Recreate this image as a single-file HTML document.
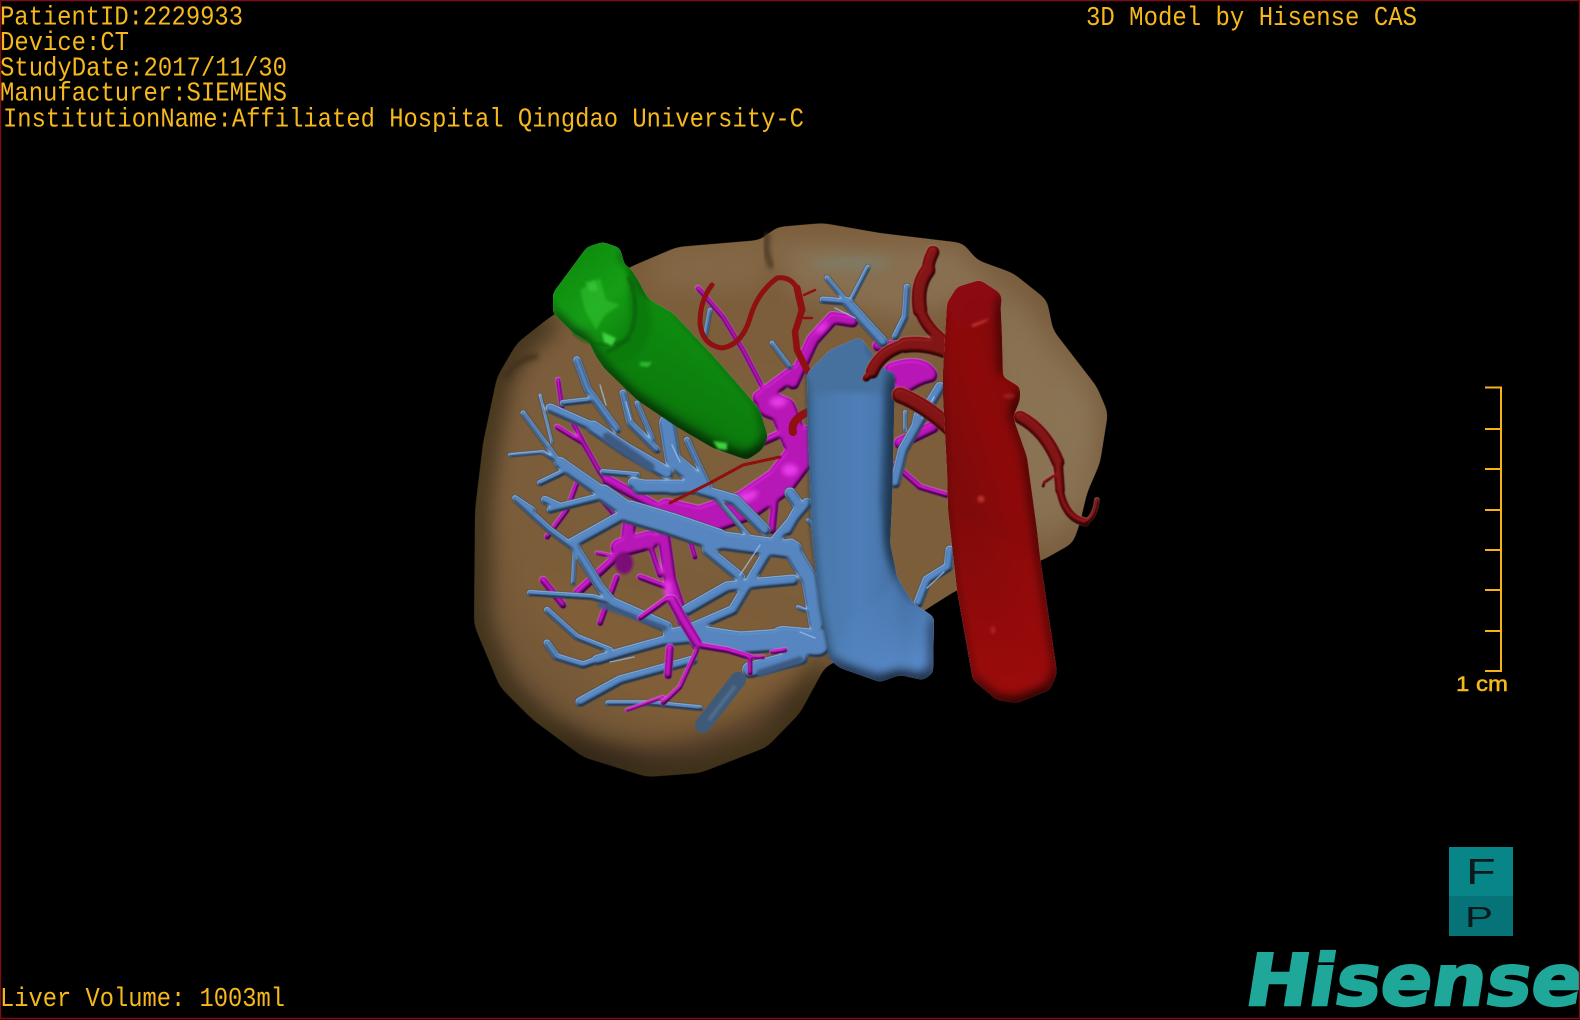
<!DOCTYPE html>
<html><head><meta charset="utf-8"><title>3D Model</title>
<style>html,body{margin:0;padding:0;background:#000;width:1580px;height:1020px;overflow:hidden}svg{display:block}
text{font-family:"Liberation Mono",monospace;fill:#f6b81c}</style></head><body>
<svg width="1580" height="1020" viewBox="0 0 1580 1020" xmlns="http://www.w3.org/2000/svg">
<defs>
<radialGradient id="lv" gradientUnits="userSpaceOnUse" cx="760" cy="450" r="350">
<stop offset="0" stop-color="#7e5f3b"/><stop offset=".75" stop-color="#7b5d3b"/><stop offset="1" stop-color="#6d5335"/></radialGradient>
<linearGradient id="gb" gradientUnits="userSpaceOnUse" x1="705" y1="345" x2="655" y2="440">
<stop offset="0" stop-color="#0e8a0f"/><stop offset=".6" stop-color="#0c7e0c"/><stop offset="1" stop-color="#065006"/></linearGradient>
<linearGradient id="gc" gradientUnits="userSpaceOnUse" x1="560" y1="260" x2="640" y2="350">
<stop offset="0" stop-color="#0c8a0c"/><stop offset=".5" stop-color="#16a016"/><stop offset="1" stop-color="#0a7a0a"/></linearGradient>
<linearGradient id="ivc" gradientUnits="userSpaceOnUse" x1="808" y1="0" x2="905" y2="0">
<stop offset="0" stop-color="#3f6c9c"/><stop offset=".14" stop-color="#4a79ad"/><stop offset=".55" stop-color="#4f80bb"/><stop offset=".88" stop-color="#4673a8"/><stop offset="1" stop-color="#3a6390"/></linearGradient>
<linearGradient id="ivl" gradientUnits="userSpaceOnUse" x1="840" y1="580" x2="930" y2="680">
<stop offset="0" stop-color="#4f80bb" stop-opacity="0"/><stop offset="1" stop-color="#5f92d6"/></linearGradient>
<linearGradient id="ao" gradientUnits="userSpaceOnUse" x1="945" y1="430" x2="1045" y2="400">
<stop offset="0" stop-color="#800a0a"/><stop offset=".45" stop-color="#8f0909"/><stop offset="1" stop-color="#7a0808"/></linearGradient>
<linearGradient id="ao2" gradientUnits="userSpaceOnUse" x1="0" y1="500" x2="0" y2="700">
<stop offset="0" stop-color="#a00a0a" stop-opacity="0"/><stop offset="1" stop-color="#9e0b0b"/></linearGradient>
<clipPath id="lc"><path d="M630 267L677 247 760 240 777 227 823 223 880 233 963 243 977 260 1013 273 1047 300 1053 330 1097 387 1108 413 1100 463 1087 493 1080 523 1073 543 1043 560 957 590 930 607 880 640 825 667 800 713 767 747 700 773 647 777 583 757 533 720 500 687 474 625 475 510 483 443 497 377 517 343 550 317Z"/></clipPath>
<filter id="goo" filterUnits="userSpaceOnUse" x="400" y="200" width="760" height="600" color-interpolation-filters="sRGB">
<feGaussianBlur in="SourceGraphic" stdDeviation="5"/><feColorMatrix type="matrix" values="1 0 0 0 0 0 1 0 0 0 0 0 1 0 0 0 0 0 16 -7.5"/></filter>
<filter id="goo3" filterUnits="userSpaceOnUse" x="400" y="200" width="760" height="600" color-interpolation-filters="sRGB">
<feGaussianBlur in="SourceGraphic" stdDeviation="3"/><feColorMatrix type="matrix" values="1 0 0 0 0 0 1 0 0 0 0 0 1 0 0 0 0 0 16 -7.5"/></filter>
<filter id="b8" x="-30%" y="-30%" width="160%" height="160%"><feGaussianBlur stdDeviation="11"/></filter>
<filter id="b18" x="-30%" y="-30%" width="160%" height="160%"><feGaussianBlur stdDeviation="18"/></filter>
<filter id="b3" x="-40%" y="-40%" width="180%" height="180%"><feGaussianBlur stdDeviation="2.5"/></filter>
<filter id="b1" x="-60%" y="-60%" width="220%" height="220%"><feGaussianBlur stdDeviation="1.2"/></filter>
<filter id="tube" filterUnits="userSpaceOnUse" x="400" y="200" width="760" height="600" color-interpolation-filters="sRGB">
<feMorphology in="SourceGraphic" operator="dilate" radius=".5" result="G"/>
<feGaussianBlur in="G" stdDeviation=".5" result="G2"/>
<feColorMatrix in="G2" type="matrix" values="0 0 0 0 0 0 0 0 0 0 0 0 0 0 0 0 0 0 1 0" result="A"/>
<feGaussianBlur in="A" stdDeviation="1.8" result="a"/>
<feDiffuseLighting in="a" surfaceScale="2.6" diffuseConstant="1.1" lighting-color="#fff" result="d"><feDistantLight azimuth="250" elevation="58"/></feDiffuseLighting>
<feComposite in="d" in2="A" operator="in" result="d2"/>
<feBlend in="G2" in2="d2" mode="multiply" result="m"/>
<feSpecularLighting in="a" surfaceScale="2.6" specularConstant=".08" specularExponent="14" lighting-color="#fff" result="s"><feDistantLight azimuth="250" elevation="58"/></feSpecularLighting>
<feComposite in="s" in2="A" operator="in" result="s2"/>
<feComposite in="m" in2="s2" operator="arithmetic" k1="0" k2="1" k3="1" k4="0"/>
</filter>
<filter id="tubeB" filterUnits="userSpaceOnUse" x="400" y="200" width="760" height="600" color-interpolation-filters="sRGB">
<feMorphology in="SourceGraphic" operator="dilate" radius=".5" result="G"/>
<feGaussianBlur in="G" stdDeviation=".5" result="G2"/>
<feColorMatrix in="G2" type="matrix" values="0 0 0 0 0 0 0 0 0 0 0 0 0 0 0 0 0 0 1.6 0" result="A"/>
<feMorphology in="A" operator="dilate" radius=".6" result="o"/>
<feFlood flood-color="#1f3348"/><feComposite in2="o" operator="in" result="line"/>
<feGaussianBlur in="A" stdDeviation="1.6" result="a"/>
<feDiffuseLighting in="a" surfaceScale="2.2" diffuseConstant="1.14" lighting-color="#fff" result="d"><feDistantLight azimuth="250" elevation="60"/></feDiffuseLighting>
<feComposite in="d" in2="A" operator="in" result="d2"/>
<feBlend in="G2" in2="d2" mode="multiply" result="m"/>
<feSpecularLighting in="a" surfaceScale="2.2" specularConstant=".06" specularExponent="18" lighting-color="#cfe6ff" result="s"><feDistantLight azimuth="250" elevation="60"/></feSpecularLighting>
<feComposite in="s" in2="A" operator="in" result="s2"/>
<feComposite in="m" in2="s2" operator="arithmetic" k1="0" k2="1" k3="1" k4="0" result="t"/>
<feMerge><feMergeNode in="line"/><feMergeNode in="t"/></feMerge>
</filter>
<filter id="soft" filterUnits="userSpaceOnUse" x="400" y="200" width="760" height="600" color-interpolation-filters="sRGB">
<feGaussianBlur in="SourceAlpha" stdDeviation="6" result="a"/>
<feDiffuseLighting in="a" surfaceScale="6" diffuseConstant="1.17" lighting-color="#fff" result="d"><feDistantLight azimuth="250" elevation="58"/></feDiffuseLighting>
<feComposite in="d" in2="SourceAlpha" operator="in" result="d2"/>
<feBlend in="SourceGraphic" in2="d2" mode="multiply"/>
</filter>
</defs>
<rect width="1580" height="1020" fill="#000"/>

<!-- liver -->
<g filter="url(#goo)"><g clip-path="url(#lc)">
<rect x="460" y="210" width="660" height="580" fill="url(#lv)"/>
<path d="M1000 270L1110 410 1090 500 1050 560 1000 500 980 300Z" fill="#8c7656" filter="url(#b18)" opacity=".9"/>
<path d="M770 240L960 245 1000 290 900 320 790 290Z" fill="#8a7355" filter="url(#b8)" opacity=".85"/>
<ellipse cx="850" cy="263" rx="42" ry="7" fill="#7f7c66" filter="url(#b3)"/>
<path d="M660 250L780 240 760 290 650 290Z" fill="#866b4a" filter="url(#b8)" opacity=".8"/>
<path d="M550 317L517 343 497 377 483 443 475 510 474 625 500 687 533 720 583 757 647 777 700 773 767 747 800 713 825 667" fill="none" stroke="#100a04" stroke-width="22" filter="url(#b8)" opacity=".7"/>
<path d="M560 740Q680 790 800 690" fill="none" stroke="#1c1208" stroke-width="22" filter="url(#b8)" opacity=".45"/>
<path d="M520 560Q530 660 660 730Q760 740 810 640" fill="#8a6234" filter="url(#b18)" opacity=".35"/>
<path d="M1080 520Q1100 430 1060 360" fill="none" stroke="#9a8668" stroke-width="20" filter="url(#b18)" opacity=".4"/>
</g></g>
<path d="M505 378Q516 358 538 356" fill="none" stroke="#3f2f1b" stroke-width="6" filter="url(#b3)" opacity=".8"/>
<path d="M768 234Q763 250 772 268" fill="none" stroke="#4f3d26" stroke-width="6" filter="url(#b3)"/>

<!-- portal magenta rear -->
<g fill="none" stroke="#b80bb8" stroke-linecap="round" stroke-linejoin="round" filter="url(#tube)">
<path d="M698 288L723 317 743 350 765 392" stroke-width="4"/>
<path d="M793 383L813 340 833 318 852 321" stroke-width="12"/>
<path d="M770 405L783 410 795 440" stroke-width="26"/>
<path d="M760 398L795 372" stroke-width="14"/>
<path d="M760 443L785 432" stroke-width="7"/>
<path d="M667 510L707 519" stroke-width="22"/>
<path d="M707 519L745 506 780 482 812 440" stroke-width="30"/>
<path d="M775 500L772 530" stroke-width="7"/>
<path d="M690 540L695 557" stroke-width="4"/>
<path d="M878 346L900 346" stroke-width="10"/>
<path d="M892 370Q920 360 930 375Q915 378 897 392" fill="#b80bb8" stroke-width="14"/>
<path d="M900 443L933 427" stroke-width="11"/>
<path d="M895 465L920 487 947 495" stroke-width="5"/>
<path d="M558 380L562 407" stroke-width="4"/><path d="M557 427L583 443 603 477" stroke-width="4"/><path d="M573 423L600 473" stroke-width="4"/>
<path d="M607 480L657 507" stroke-width="9"/><path d="M577 483L567 510 547 537" stroke-width="4"/>
<path d="M600 497L617 517" stroke-width="5"/>
<path d="M663 530L670 580 683 620 697 643" stroke-width="12"/>
<path d="M657 537L627 547 577 593" stroke-width="7"/>
<path d="M627 545L630 520" stroke-width="13"/><path d="M620 548L650 540" stroke-width="18"/>
<path d="M640 577L667 587" stroke-width="5"/><path d="M617 577L600 623" stroke-width="5"/>
<path d="M543 580L563 605" stroke-width="6"/><path d="M597 553L612 556" stroke-width="3"/><path d="M650 545L660 575" stroke-width="5"/>
<path d="M640 618L670 597" stroke-width="4"/>
</g>
<ellipse cx="624" cy="563" rx="9" ry="11" fill="#7a0f78" filter="url(#b1)"/>
<g fill="#e63ae6" filter="url(#b3)"><ellipse cx="745" cy="498" rx="14" ry="5" transform="rotate(-25 745 498)"/><ellipse cx="778" cy="402" rx="8" ry="5"/><ellipse cx="790" cy="470" rx="8" ry="6"/><ellipse cx="668" cy="590" rx="4" ry="10"/><ellipse cx="822" cy="328" rx="7" ry="3" transform="rotate(-40 822 328)"/></g>

<!-- hepatic blue -->
<g fill="none" stroke="#5080ba" stroke-linecap="round" stroke-linejoin="round" filter="url(#tubeB)">
<path d="M823 300L847 302" stroke-width="5"/><path d="M847 302L863 320 883 342" stroke-width="8"/>
<path d="M827 278L847 302" stroke-width="3"/><path d="M868 267L852 298" stroke-width="2.5"/>
<path d="M907 287L905 317 895 337" stroke-width="4.5"/>
<path d="M772 343L790 367" stroke-width="2.5"/><path d="M710 310L705 337" stroke-width="2.5"/>
<path d="M940 387L920 420 903 450 895 483" stroke-width="8"/><path d="M905 430L905 412" stroke-width="2"/><path d="M912 432L916 414" stroke-width="2"/>
<path d="M950 550L948 567 927 580 918 603" stroke-width="7"/>
<path d="M510 455L543 452 560 463" stroke-width="2"/>
<path d="M523 413L560 463" stroke-width="3"/>
<path d="M560 463L603 493" stroke-width="10"/>
<path d="M603 493L630 512" stroke-width="15"/>
<path d="M630 512L670 524 717 540" stroke-width="21"/>
<path d="M717 540L793 550" stroke-width="17"/>
<path d="M807 503L773 543 733 610 687 630 668 634" stroke-width="8"/>
<path d="M790 547L810 580 817 623" stroke-width="15"/>
<path d="M817 643L783 640" stroke-width="26"/>
<path d="M783 640L740 643 700 637" stroke-width="21"/>
<path d="M700 637L667 640" stroke-width="10"/>
<path d="M667 640L620 653 597 660" stroke-width="8"/>
<path d="M597 660L583 665 557 657 547 643" stroke-width="5"/>
<path d="M610 650L577 637 547 610" stroke-width="4"/>
<path d="M793 580L760 583 727 587 687 610" stroke-width="9"/>
<path d="M707 550L740 577" stroke-width="8"/>
<path d="M627 513L573 543" stroke-width="9"/>
<path d="M575 547L573 583" stroke-width="2.5"/>
<path d="M575 547L600 587 613 603" stroke-width="7"/>
<path d="M613 603L667 627" stroke-width="9"/>
<path d="M530 593L593 597 613 603" stroke-width="4"/>
<path d="M517 500L550 530 573 547" stroke-width="4.5"/>
<path d="M550 510L600 497" stroke-width="5"/>
<path d="M580 702L620 680 693 660" stroke-width="7"/>
<path d="M608 703L650 703 700 708" stroke-width="3.5"/>
<path d="M750 670L800 657" stroke-width="14"/>
<path d="M633 483L673 490 707 487" stroke-width="9"/>
<path d="M700 490L735 500 765 530" stroke-width="9"/>
<path d="M550 408L593 427" stroke-width="7"/><path d="M593 427L627 450 667 473" stroke-width="11"/>
<path d="M563 403L590 400" stroke-width="4"/>
<path d="M577 360L588 390 617 430" stroke-width="5.5"/>
<path d="M623 393L630 423 657 450" stroke-width="5"/>
<path d="M637 403L653 440" stroke-width="3"/>
<path d="M667 423L673 460 700 483" stroke-width="14"/>
<path d="M640 487L693 487" stroke-width="13"/>
<path d="M687 440L707 483" stroke-width="4"/>
<path d="M603 472L637 475" stroke-width="4"/>
<path d="M540 483L563 472" stroke-width="4"/>
<path d="M545 500L560 507 600 497" stroke-width="6"/>
<path d="M515 498L533 510" stroke-width="3.5"/>
<path d="M540 395L552 443" stroke-width="1"/>
<path d="M707 487L752 540" stroke-width="2.5"/>
<path d="M790 493L800 507 787 530" stroke-width="9"/>
<path d="M808 520L820 532" stroke-width="2"/><path d="M815 590L825 596" stroke-width="3"/><path d="M805 610L798 607" stroke-width="2"/>
</g>
<!-- darker textured vein parts -->
<g fill="none" stroke="#3d5a82" stroke-linecap="round" filter="url(#b1)">
<path d="M607 437L650 467" stroke-width="9"/>
<path d="M600 605L665 628" stroke-width="5"/>
<path d="M760 673L800 660" stroke-width="7"/>
</g>
<path d="M703 725L738 680" stroke="#3f5a78" stroke-width="16" stroke-linecap="round" fill="none"/>
<path d="M709 720L735 686" stroke="#56728f" stroke-width="3" fill="none" filter="url(#b1)"/>
<!-- light glints -->
<g fill="none" stroke="#9cc4ec" stroke-linecap="round" stroke-width="1.4" opacity=".75">
<path d="M600 385L606 405"/><path d="M626 402L631 420"/><path d="M672 445L680 462"/><path d="M740 575L760 545"/><path d="M835 308L855 318"/><path d="M922 418L934 397"/><path d="M927 588L944 572"/><path d="M634 657L610 662"/><path d="M800 632L815 638"/>
</g>

<!-- magenta front -->
<g fill="none" stroke="#bf0dbf" stroke-linecap="round" stroke-linejoin="round" filter="url(#tube)">
<path d="M672 600L683 620 697 643" stroke-width="9"/>
<path d="M640 618L668 598" stroke-width="4"/>
<path d="M697 645L727 650 750 657" stroke-width="5"/>
<path d="M750 657L750 673" stroke-width="4"/><path d="M750 657L763 657" stroke-width="3"/>
<path d="M697 650L680 687 663 703" stroke-width="3.5"/>
<path d="M663 697L627 710" stroke-width="2.5"/>
<path d="M670 648L668 675" stroke-width="7"/>
<path d="M772 652L785 650" stroke-width="3.5"/>
</g>

<!-- thin red -->
<g fill="none" stroke="#8f1010" stroke-linecap="round" stroke-linejoin="round">
<path d="M670 503L710 483 743 465 780 457" stroke-width="3"/>
<path d="M712 285Q700 300 700 323Q702 345 722 348Q742 345 750 318Q757 293 777 278Q790 276 797 288" stroke-width="5"/>
<path d="M797 288L802 310" stroke-width="7"/>
<path d="M802 310L795 332 797 350 808 372" stroke-width="6.5"/>
<path d="M804 295L815 290M804 318L812 318" stroke-width="2.5"/>
<path d="M808 412Q790 420 793 432" stroke-width="8"/>
</g>

<!-- gallbladder -->
<g filter="url(#soft)"><g filter="url(#goo3)">
<path d="M630 273L650 300 673 313 717 360 737 383 760 410 768 437 762 450 747 460 713 448 677 427 637 400 603 367 590 345Z" fill="url(#gb)"/>
<path d="M628 265Q650 295 652 320Q650 350 625 362Q600 367 595 355L600 300Z" fill="#0b7c0b"/>
<path d="M603 242L620 248 628 277 630 320 625 343 600 348 573 333 553 313 553 293 570 270 587 247Z" fill="url(#gc)"/>
</g></g>
<path d="M628 277Q640 300 632 330Q625 345 607 352" fill="none" stroke="#0a5c0a" stroke-width="2.5" filter="url(#b1)"/>
<path d="M573 333Q595 352 630 340" fill="none" stroke="#0a620a" stroke-width="2" filter="url(#b1)"/>
<g fill="#3fd33f" filter="url(#b1)">
<path d="M580 290L600 278 606 300 620 305 605 315 596 330 585 310Z" opacity=".4"/>
<path d="M602 332L616 338 612 346 604 342Z"/>
<path d="M640 362L652 362 648 367 640 366Z" opacity=".7"/>
<path d="M713 441L727 443 727 450 718 449Z"/>
<path d="M585 282L595 280 598 290 590 292Z" opacity=".5"/>
</g>

<!-- IVC -->
<g filter="url(#soft)"><g filter="url(#goo3)">
<path d="M860 337L830 350 807 373 808 430 812 533 820 610 830 660 840 668 880 682 900 675 923 680 933 673 934 617 913 603 897 577 890 543 892 500 895 373 885 370 870 350Z" fill="url(#ivc)"/>
<path d="M830 660L840 668 880 682 900 675 923 680 933 673 934 617 913 603 897 577 878 600 850 620Z" fill="url(#ivl)"/>
<path d="M812 398Q825 388 892 395L895 373 885 370 870 350 860 337 830 350 807 373Z" fill="#46719f"/>
<path d="M884 372L895 373 892 500 890 543 897 577 886 556 880 500Z" fill="#31577f"/>
</g></g>
<path d="M806 373L810 530 820 610 830 660" fill="none" stroke="#2a4664" stroke-width="1.5" filter="url(#b1)"/>

<!-- red branches -->
<g fill="none" stroke="#7e0a0a" stroke-linecap="round" stroke-linejoin="round" filter="url(#tube)">
<path d="M933 252Q928 262 928 270" stroke-width="12"/>
<path d="M928 270Q916 285 920 310" stroke-width="14"/>
<path d="M920 310Q926 328 945 342" stroke-width="11"/>
<path d="M950 352Q925 342 905 345" stroke-width="15"/>
<path d="M905 345Q880 352 872 372" stroke-width="12"/>
<path d="M872 372L866 378" stroke-width="6"/>
<path d="M900 395Q925 405 950 428" stroke-width="15"/>
<path d="M1020 417Q1045 430 1058 462" stroke-width="12"/>
<path d="M1058 462L1060 490" stroke-width="9"/>
<path d="M1060 490Q1065 518 1085 522" stroke-width="7"/>
<path d="M1085 522Q1095 518 1097 500" stroke-width="3.5"/>
<path d="M1053 476L1044 482 1043 486" stroke-width="2"/>
</g>
<!-- aorta -->
<g filter="url(#soft)"><g filter="url(#goo3)">
<path d="M980 280L1000 293 1002 337 1003 377 1020 387 1020 400 1013 417 1027 457 1037 530 1040 557 1057 673 1050 690 1017 703 997 700 973 680 957 590 948 510 947 470 943 397 943 370 947 303 957 287Z" fill="url(#ao)"/>
<path d="M948 510L957 590 973 680 997 700 1017 703 1050 690 1057 673 1040 557Z" fill="url(#ao2)"/>
<path d="M947 303Q950 326 975 326Q998 322 1002 300L1000 293 980 280 957 287Z" fill="#8c0a12"/>
</g></g>
<g fill="#c83a36" filter="url(#b1)">
<path d="M971 325L990 318 985 322 973 327Z"/>
<ellipse cx="981" cy="499" rx="3.5" ry="3.5" opacity=".8"/>
<ellipse cx="1009" cy="396" rx="6" ry="2.5" opacity=".4"/>
<ellipse cx="993" cy="630" rx="2.5" ry="4" opacity=".5"/>
</g>

<!-- text -->
<text x="0" y="24.5" font-size="27" textLength="243" lengthAdjust="spacingAndGlyphs">PatientID:2229933</text>
<text x="0" y="50" font-size="27" textLength="129" lengthAdjust="spacingAndGlyphs">Device:CT</text>
<text x="0" y="75.5" font-size="27" textLength="287" lengthAdjust="spacingAndGlyphs">StudyDate:2017/11/30</text>
<text x="0" y="100.5" font-size="27" textLength="287" lengthAdjust="spacingAndGlyphs">Manufacturer:SIEMENS</text>
<text x="3" y="126.5" font-size="27" textLength="801" lengthAdjust="spacingAndGlyphs">InstitutionName:Affiliated Hospital Qingdao University-C</text>
<text x="1086" y="25" font-size="27" textLength="331" lengthAdjust="spacingAndGlyphs">3D Model by Hisense CAS</text>
<text x="0" y="1006" font-size="27" textLength="285" lengthAdjust="spacingAndGlyphs">Liver Volume: 1003ml</text>

<!-- scale -->
<path d="M1485 387.5H1501V671H1485M1485 429H1501M1485 469H1501M1485 510H1501M1485 550H1501M1485 590H1501M1485 631H1501" fill="none" stroke="#f5b414" stroke-width="2"/>
<text x="1456" y="691" font-size="21" textLength="52" lengthAdjust="spacingAndGlyphs" style="font-family:'Liberation Sans',sans-serif;stroke:#f6b81c;stroke-width:.5">1 cm</text>

<!-- orientation cube -->
<rect x="1449" y="847" width="64" height="49" fill="#078587"/>
<rect x="1449" y="896" width="64" height="40" fill="#067378"/>
<text transform="translate(1466 884) scale(1.35 1)" font-size="36" style="font-family:'Liberation Sans',sans-serif;fill:#0a1a1c">F</text>
<text transform="translate(1465 927) scale(1.45 1)" font-size="29" style="font-family:'Liberation Sans',sans-serif;fill:#0a1a1c">P</text>

<!-- logo -->
<text transform="translate(1243 1005) skewX(-9)" x="0" y="0" font-size="71" textLength="337" lengthAdjust="spacingAndGlyphs" style="font-family:'DejaVu Sans',sans-serif;font-weight:bold;fill:#1fa79a;stroke:#1fa79a;stroke-width:2.4">Hisense</text>

<!-- frame -->
<path d="M.5 .5H1579.5M.5 .5V1018.5H1579.5V.5" fill="none" stroke="#7c0d16" stroke-width="1.4"/>
</svg>
</body></html>
